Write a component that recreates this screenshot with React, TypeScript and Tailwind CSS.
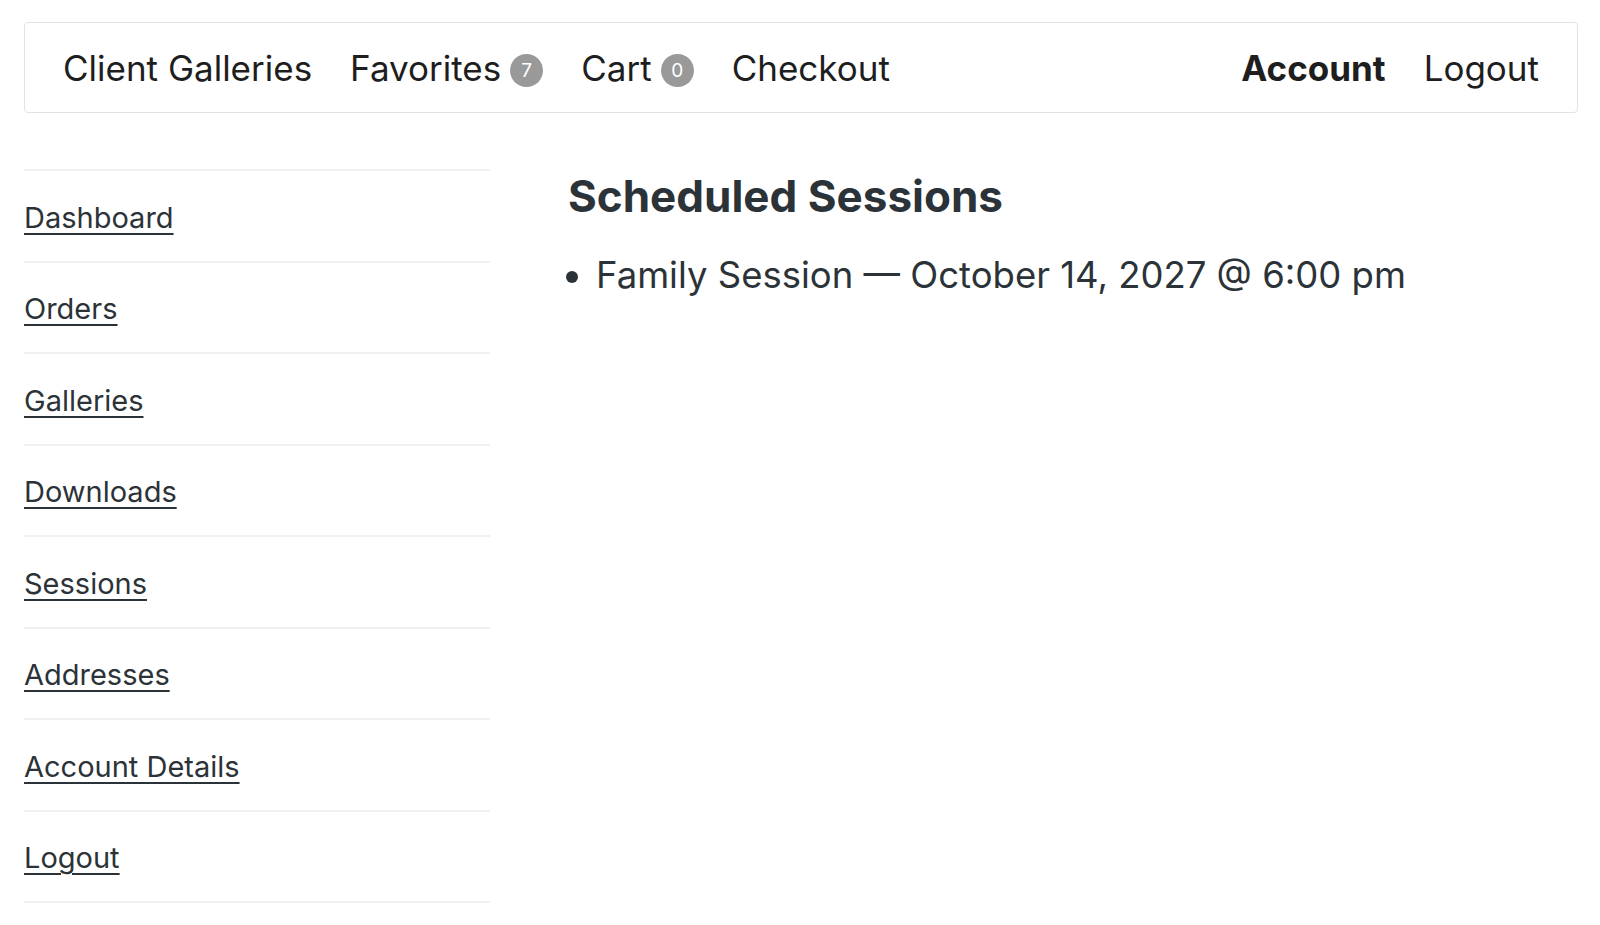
export default function App() {
  const links = ["Dashboard", "Orders", "Galleries", "Downloads", "Sessions", "Addresses", "Account Details", "Logout"];

  return (
    <div className="min-h-screen bg-white text-[#2c3338]" style={{ fontFamily: "Inter, 'Noto Sans', sans-serif" }}>
      <div className="pl-6 pr-[22px] pt-[22px]">
        <header className="h-[91px] flex items-center justify-between px-[38px] border border-[#e2e2e2] rounded text-[#1e1e1e] text-[35px]">
          <nav className="flex items-center gap-[38px] pt-[2px]">
            <a href="#">Client Galleries</a>
            <a href="#" className="flex items-center">
              Favorites
              <span className="ml-[9px] mt-[4px] w-[33px] h-[33px] rounded-full bg-[#999] text-white text-[19px] leading-none flex items-center justify-center">7</span>
            </a>
            <a href="#" className="flex items-center">
              Cart
              <span className="ml-[9px] mt-[4px] w-[33px] h-[33px] rounded-full bg-[#999] text-white text-[19px] leading-none flex items-center justify-center">0</span>
            </a>
            <a href="#">Checkout</a>
          </nav>
          <nav className="flex items-center gap-[38px] pt-[2px]">
            <a href="#" className="font-bold">Account</a>
            <a href="#">Logout</a>
          </nav>
        </header>
      </div>

      <div className="flex pl-6 pt-14">
        <ul className="w-[466px] shrink-0 border-t-2 border-[#f0f0f0]">
          {links.map((l) => (
            <li key={l} className="h-[91.5px] flex items-center pt-[3px] border-b-2 border-[#f0f0f0]">
              <a href="#" className="text-[29px] underline underline-offset-[5px] decoration-2 text-[#2c3338]">{l}</a>
            </li>
          ))}
        </ul>
        <main className="ml-[78px]">
          <h2 className="text-[44px] font-bold text-[#2c3338] leading-tight">Scheduled Sessions</h2>
          <ul className="mt-6 list-disc pl-[28px] text-[36.5px] text-[#2c3338]">
            <li>Family Session — October 14, 2027 @ 6:00 pm</li>
          </ul>
        </main>
      </div>
    </div>
  );
}
